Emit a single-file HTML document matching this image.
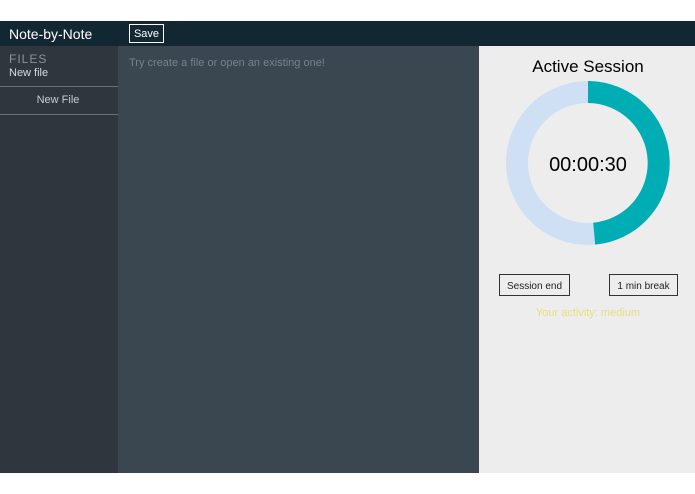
<!DOCTYPE html><html><head><style>
body{margin:0;width:695px;height:494px;background:#fff;font-family:"Liberation Sans",sans-serif;position:relative;overflow:hidden}
.hd{position:absolute;top:21px;left:0;width:695px;height:25px;background:#132733}
.logo{position:absolute;left:9px;top:5px;color:#fff;font-size:14px}
.save{position:absolute;left:129px;top:3px;width:33px;height:17px;border:1px solid #fff;color:#fff;font-size:11px;line-height:19px;text-align:center}
.sb{position:absolute;top:46px;left:0;width:118px;height:427px;background:#2f363e}
.ed{position:absolute;top:46px;left:118px;width:361px;height:427px;background:#3b4750}
.rp{position:absolute;top:46px;left:479px;width:216px;height:427px;background:#ededed}
.btn{position:absolute;border:1px solid #333;height:20px;font-size:10px;line-height:23px;text-align:center;color:#222;background:#ededed}
</style></head><body>
<div class="hd"><div class="logo">Note-by-Note</div><div class="save">Save</div></div>
<div class="sb">
<div style="position:absolute;left:9px;top:6px;color:#8a9299;font-size:12px;letter-spacing:1px">FILES</div>
<div style="position:absolute;left:9px;top:21px;color:#d8dcdf;font-size:11px">New file</div>
<div style="position:absolute;left:0;top:40px;width:118px;height:1px;background:#6a7177"></div>
<div style="position:absolute;left:0;top:48px;width:116px;text-align:center;color:#c9cdd0;font-size:11px">New File</div>
<div style="position:absolute;left:0;top:68px;width:118px;height:1px;background:#6a7177"></div>
</div>
<div class="ed"><div style="position:absolute;left:11px;top:11px;color:#77828a;font-size:11px">Try create a file or open an existing one!</div></div>
<div class="rp">
<div style="position:absolute;left:0;top:11px;width:218px;text-align:center;font-size:17px;color:#000">Active Session</div>
<svg style="position:absolute;left:0;top:0" width="216" height="220"><circle cx="109" cy="117" r="71" fill="none" stroke="#cfe0f5" stroke-width="22"/>
<path d="M109 46 A71 71 0 0 1 115.2 187.7" fill="none" stroke="#00adb5" stroke-width="22"/></svg>
<div style="position:absolute;left:0;top:108px;width:218px;text-align:center;font-size:20px;color:#000">00:00:30</div>
<div class="btn" style="left:20px;top:228px;width:69px">Session end</div>
<div class="btn" style="left:130px;top:228px;width:67px">1 min break</div>
<div style="position:absolute;left:0;top:261px;width:218px;text-align:center;font-size:11px;color:#e6e07a">Your activity: medium</div>
</div>
</body></html>
